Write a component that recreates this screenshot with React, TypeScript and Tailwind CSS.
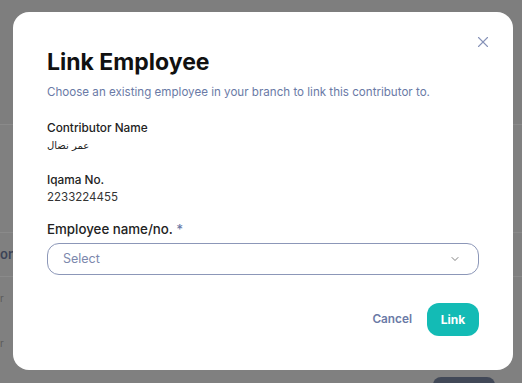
import { X, ChevronDown } from 'lucide-react';

export default function App() {
    return (
        <div className="relative w-[522px] h-[383px] overflow-hidden bg-[#808080] font-['Inter',sans-serif]">
            {/* page behind the overlay */}
            <div className="h-[125px] border-b border-[#8a8a8a] bg-[#7e7e7e]"></div>
            <div className="h-[108px] border-b border-[#8a8a8a]"></div>
            <div className="h-[44px] border-b border-[#8a8a8a] flex items-center">
                <span className="text-[13px] font-semibold text-[#3c4357]">on</span>
            </div>
            <div className="flex flex-col gap-[30px] pt-[14px] text-[10px] text-[#5a5a5a]">
                <span>r</span>
                <span>r</span>
            </div>
            <div className="absolute left-[433px] top-[377px] w-[62px] h-[20px] rounded-lg bg-[#414857]"></div>

            {/* modal */}
            <div className="absolute left-[13px] top-[12px] w-[500px] h-[358px] rounded-[16px] bg-white px-[34px] pt-[36px]">
                <button className="absolute right-[21px] top-[21px] text-[#8793b8]">
                    <X size={18} strokeWidth={1.5} />
                </button>
                <h2 className="text-[23px] leading-[28px] font-bold text-[#111]">Link Employee</h2>
                <p className="mt-[7px] text-[11.6px] leading-[18px] text-[#6a7aa6]">
                    Choose an existing employee in your branch to link this contributor to.
                </p>

                <div className="mt-[19px]">
                    <div className="text-[11.8px] leading-[16px] font-medium text-[#222]">Contributor Name</div>
                    <div className="mt-[2px] text-[10px] leading-[16px] text-[#222] font-['DejaVu_Sans',sans-serif]">عمر نضال</div>
                </div>

                <div className="mt-[18px]">
                    <div className="text-[11.8px] leading-[16px] font-medium text-[#222]">Iqama No.</div>
                    <div className="mt-[1px] text-[11.5px] leading-[16px] text-[#333]">2233224455</div>
                </div>

                <div className="mt-[14px] text-[13.3px] leading-[20px] font-medium text-[#222]">
                    Employee name/no. <span className="text-[#6a7aa6]">*</span>
                </div>
                <div className="mt-[4px] h-[32px] rounded-[12px] border border-[#8c97b8] flex items-center justify-between pl-[15px] pr-[17px]">
                    <span className="text-[12.5px] text-[#7c88ad]">Select</span>
                    <ChevronDown size={12} strokeWidth={1.5} className="text-[#555]" />
                </div>

                <div className="mt-[28px] flex items-center justify-end gap-[15px]">
                    <button className="text-[11.8px] font-semibold text-[#6a7aa6]">Cancel</button>
                    <button className="h-[33px] w-[52px] rounded-[12px] bg-[#13bbb5] text-[12px] font-bold text-white">Link</button>
                </div>
            </div>
        </div>
    );
}
